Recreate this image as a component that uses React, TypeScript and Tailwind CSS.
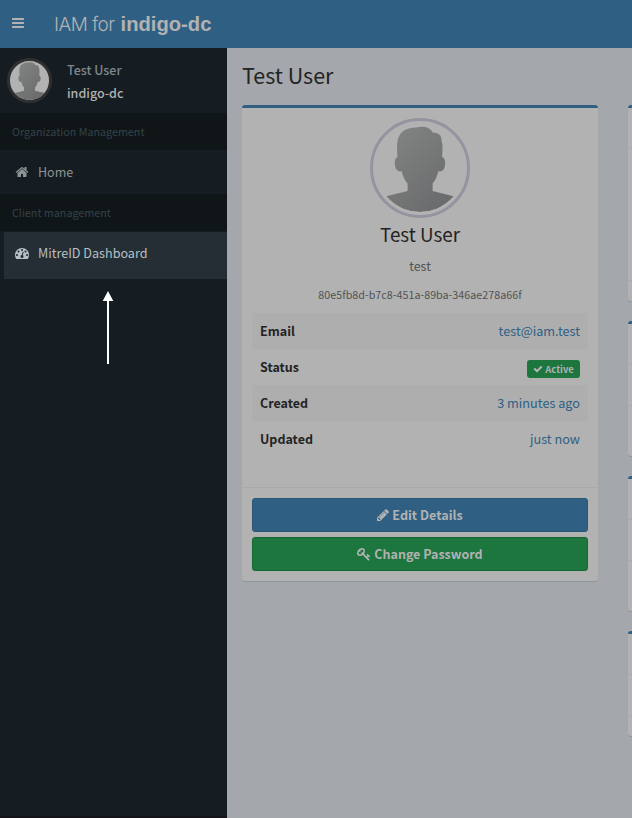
import type { ReactNode } from "react";

const PATHS = {
  bars: "M1664 1344v128q0 26-19 45t-45 19h-1408q-26 0-45-19t-19-45v-128q0-26 19-45t45-19h1408q26 0 45 19t19 45zm0-512v128q0 26-19 45t-45 19h-1408q-26 0-45-19t-19-45v-128q0-26 19-45t45-19h1408q26 0 45 19t19 45zm0-512v128q0 26-19 45t-45 19h-1408q-26 0-45-19t-19-45v-128q0-26 19-45t45-19h1408q26 0 45 19t19 45z",
  home: "M1472 992v480q0 26-19 45t-45 19h-384v-384h-256v384h-384q-26 0-45-19t-19-45v-480q0-1 .5-3t.5-3l575-474 575 474q1 2 1 6zm223-69l-62 74q-8 9-21 11h-3q-13 0-21-7l-692-577-692 577q-12 8-24 7-13-2-21-11l-62-74q-8-10-7-23.5t11-21.5l719-599q32-26 76-26t76 26l244 204v-195q0-14 9-23t23-9h192q14 0 23 9t9 23v408l219 182q10 8 11 21.5t-7 23.5z",
  dashboard:
    "M384 1152q0-53-37.5-90.5t-90.5-37.5-90.5 37.5-37.5 90.5 37.5 90.5 90.5 37.5 90.5-37.5 37.5-90.5zm192-448q0-53-37.5-90.5t-90.5-37.5-90.5 37.5-37.5 90.5 37.5 90.5 90.5 37.5 90.5-37.5 37.5-90.5zm428 481l101-382q6-26-7.5-48.5t-38.5-29.5-48 6.5-30 39.5l-101 382q-60 5-107 43.5t-63 98.5q-20 77 20 146t117 89 146-20 89-117q16-60-6-117t-72-91zm660-33q0-53-37.5-90.5t-90.5-37.5-90.5 37.5-37.5 90.5 37.5 90.5 90.5 37.5 90.5-37.5 37.5-90.5zm-640-640q0-53-37.5-90.5t-90.5-37.5-90.5 37.5-37.5 90.5 37.5 90.5 90.5 37.5 90.5-37.5 37.5-90.5zm448 192q0-53-37.5-90.5t-90.5-37.5-90.5 37.5-37.5 90.5 37.5 90.5 90.5 37.5 90.5-37.5 37.5-90.5zm320 448q0 261-141 483-19 29-54 29h-1402q-35 0-54-29-141-221-141-483 0-182 71-348t191-286 286-191 348-71 348 71 286 191 191 286 71 348z",
  check:
    "M1671 566q0 40-28 68l-724 724-136 136q-28 28-68 28t-68-28l-136-136-362-362q-28-28-28-68t28-68l136-136q28-28 68-28t68 28l294 295 656-657q28-28 68-28t68 28l136 136q28 28 28 68z",
  pencil:
    "M491 1536l91-91-235-235-91 91v107h128v128h107zm523-928q0-22-22-22-10 0-17 7l-542 542q-7 7-7 17 0 22 22 22 10 0 17-7l542-542q7-7 7-17zm-54-192l416 416-832 832h-416v-416zm683 96q0 53-37 90l-166 166-416-416 166-165q36-38 90-38 53 0 91 38l235 234q37 39 37 91z",
  key: "M832 512q0-80-56-136t-136-56-136 56-56 136q0 42 19 83-41-19-83-19-80 0-136 56t-56 136 56 136 136 56 136-56 56-136q0-42-19-83 41 19 83 19 80 0 136-56t56-136zm851 704q0 17-49 66t-66 49q-9 0-28.5-16t-36.5-33-38.5-40-24.5-26l-96 96 220 220q28 28 28 68 0 42-39 81t-81 39q-40 0-68-28l-671-671q-176 131-365 131-163 0-265.5-102.5t-102.5-265.5q0-160 95-313t248-248 313-95q163 0 265.5 102.5t102.5 265.5q0 189-131 365l355 355 96-96q-3-3-26-24.5t-40-38.5-33-36.5-16-28.5q0-17 49-66t66-49q13 0 23 10 6 6 46 44.5t82 79.5 86.5 86 73 78 28.5 41z",
};

function Icon({ name, className }: { name: keyof typeof PATHS; className: string }) {
  return (
    <svg viewBox="0 0 1792 1792" fill="currentColor" className={`shrink-0 ${className}`}>
      <path d={PATHS[name]} />
    </svg>
  );
}

function Avatar({ id, className }: { id: string; className: string }) {
  return (
    <svg viewBox="0 0 88 88" className={`rounded-full ${className}`}>
      <defs>
        <linearGradient id={id} x1="0" y1="0" x2="1" y2="1">
          <stop offset="0" stopColor="#868787" />
          <stop offset="1" stopColor="#646667" />
        </linearGradient>
        <clipPath id={`${id}-clip`}>
          <circle cx="44" cy="44" r="44" />
        </clipPath>
      </defs>
      <path
        clipPath={`url(#${id}-clip)`}
        fill={`url(#${id})`}
        d="M21.6 32.8 C20.6 25 21 18 22.4 13.5 C25 6.5 31 3.8 40 3.4 C47 1.6 54.5 3 57 8.8 C62 8.4 65.5 11 65.6 16.5 C67 21 66.6 27 66 32.8 C69 33.8 69.8 39 68.8 42.5 C67.8 46.6 65.5 48 62.4 47.2 C61 53 59 56.500 56.600 59.600 L56.600 67 L77.500 72.200 L88 88 L0 88 L10.300 72.200 L31.600 67 L31.600 59.600 C29 56.500 27 53 25.800 47.200 C22.500 48 20.200 46.600 19.200 42.500 C18.200 39 19 33.800 21.600 32.800 Z"
      />
    </svg>
  );
}

function SectionLabel({ children }: { children: ReactNode }) {
  return (
    <div className="flex h-[37px] items-center bg-[#101517] pl-3 text-[10.75px] text-[#33424a]">
      {children}
    </div>
  );
}

function DetailRow({ label, striped, children }: { label: string; striped?: boolean; children: ReactNode }) {
  return (
    <div className={`flex h-9 items-center justify-between px-2 ${striped ? "bg-[#aeaeae]" : ""}`}>
      <span className="font-bold text-[#232323]">{label}</span>
      <span className="text-[12.7px] text-[#2f6084]">{children}</span>
    </div>
  );
}

function SidePanel({ rows }: { rows: string[] }) {
  return (
    <div className="mb-5 w-20 rounded-[3px] border-t-[3px] border-[#2f6084] bg-[#b2b2b2] shadow-[0_1px_1px_rgba(0,0,0,0.12)]">
      {rows.map((height, i) => (
        <div key={i} className={`${height} ${i < rows.length - 1 ? "border-b border-[#a9a9a9]" : ""}`} />
      ))}
    </div>
  );
}

export default function App() {
  return (
    <div className="relative flex h-[818px] w-[632px] flex-col overflow-hidden bg-[#a4a8ac] font-['Noto_Sans_CJK_JP',sans-serif] text-[12.5px] leading-5">
      <header className="flex h-12 shrink-0 items-center bg-[#2f6084] text-[#b2b2b2]">
        <Icon name="bars" className="ml-[11px] size-3.5 -translate-y-px" />
        <div className="ml-[29px] flex items-baseline gap-[6px] whitespace-nowrap text-[20.2px]">
          <span className="font-['Inter',sans-serif] text-[19px] font-light tracking-[-0.55px]">IAM for</span>
          <span className="font-['Liberation_Sans',sans-serif] font-bold">indigo-dc</span>
        </div>
      </header>

      <div className="flex min-h-0 flex-1">
        <aside className="w-[227px] shrink-0 border-b-2 border-[#141418] bg-[#151c22]">
          <div className="flex h-[65px] items-center">
            <div className="ml-[7px] size-[45px] rounded-full border-[3px] border-[#303030] bg-[#b2b2b2]">
              <Avatar id="small" className="size-[39px]" />
            </div>
            <div className="ml-[15px] font-medium leading-[23px]">
              <div className="text-[#7f878b]">Test User</div>
              <div className="text-[#b2b2b2]">indigo-dc</div>
            </div>
          </div>
          <SectionLabel>Organization Management</SectionLabel>
          <div className="flex h-11 items-center pl-[15px] text-[#8d9395]">
            <Icon name="home" className="mr-[9px] size-3.5" />
            Home
          </div>
          <SectionLabel>Client management</SectionLabel>
          <div className="mt-px ml-1 flex h-[47px] items-center bg-[#262e35] pb-[5px] pl-[11px] text-[12.6px] text-[#b4c0c4]">
            <Icon name="dashboard" className="mr-[9px] size-3.5" />
            MitreID Dashboard
          </div>
        </aside>

        <main className="w-[405px] shrink-0 pl-[15px]">
          <h1 className="h-[57px] pt-3 text-[21.5px] leading-[30px] text-[#232323]">Test User</h1>
          <div className="flex items-start gap-[30px]">
            <section className="h-[476px] w-[356px] shrink-0 rounded-[3px] border-t-[3px] border-[#2f6084] bg-[#b2b2b2] shadow-[0_1px_1px_rgba(0,0,0,0.12)]">
              <div className="flex h-[379px] flex-col items-center px-2.5 pt-2.5">
                <div className="size-[100px] shrink-0 rounded-full border-[3px] border-[#9394a0] p-[3px]">
                  <Avatar id="large" className="size-[88px]" />
                </div>
                <h3 className="mt-1 text-[18.8px] leading-6 text-[#232323]">Test User</h3>
                <p className="mt-2.5 text-[#535353]">test</p>
                <p className="mt-[9px] text-[10.75px] text-[#535353]">80e5fb8d-b7c8-451a-89ba-346ae278a66f</p>
                <div className="mt-2 w-full">
                  <DetailRow label="Email" striped>
                    test@iam.test
                  </DetailRow>
                  <DetailRow label="Status">
                    <span className="mt-[3px] flex h-[18px] w-[53px] items-center justify-center gap-[2px] rounded-[3px] bg-[#1c763e] text-[9.4px] font-bold text-[#b2b2b2]">
                      <Icon name="check" className="size-[10px]" />
                      Active
                    </span>
                  </DetailRow>
                  <DetailRow label="Created" striped>
                    3 minutes ago
                  </DetailRow>
                  <DetailRow label="Updated">just now</DetailRow>
                </div>
              </div>
              <div className="flex flex-col gap-[5px] border-t border-[#a9a9a9] p-2.5 font-bold text-[#b2b2b2]">
                <button className="flex h-[34px] items-center justify-center gap-[2px] rounded-[3px] border border-[#295775] bg-[#2f6084] pr-px text-[12.6px]">
                  <Icon name="pencil" className="size-3.5" />
                  Edit Details
                </button>
                <button className="flex h-[34px] items-center justify-center gap-[3px] rounded-[3px] border border-[#176735] bg-[#1c763e]">
                  <Icon name="key" className="size-3.5" />
                  Change Password
                </button>
              </div>
            </section>
            <div className="shrink-0">
              <SidePanel rows={["h-[41px]", "h-[132px]", "h-[20px]"]} />
              <SidePanel rows={["h-[41px]", "h-[41px]", "h-[50px]"]} />
              <SidePanel rows={["h-[41px]", "h-[41px]", "h-[50px]"]} />
              <SidePanel rows={["h-[41px]", "h-[41px]", "h-[20px]"]} />
            </div>
          </div>
        </main>
      </div>

      {/* Pointer to the dashboard entry */}
      <svg viewBox="0 0 12 74" className="absolute top-[291px] left-[102px] h-[74px] w-3">
        <path d="M6 0l5.300 10H7v63H5V10H.7z" fill="#fff" />
      </svg>
    </div>
  );
}
